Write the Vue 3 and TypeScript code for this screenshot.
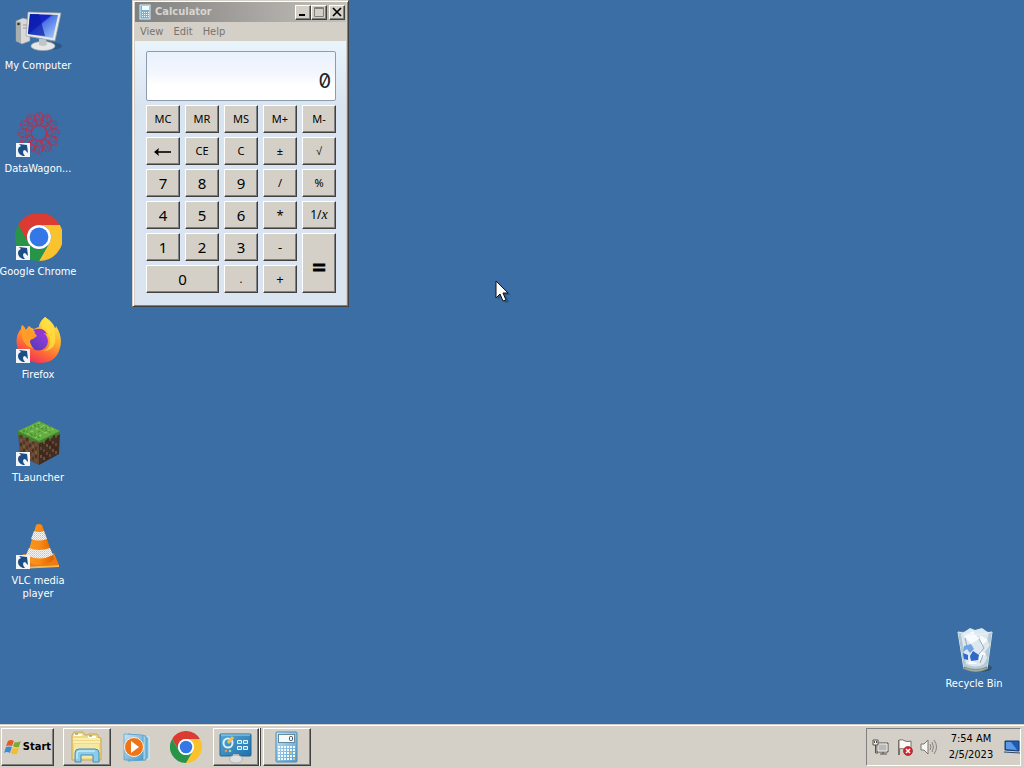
<script setup lang="ts">
import { ref } from 'vue'

interface Shortcut { id: string; label: string; linked: boolean }
interface Key { label: string; kind: string; name?: string }

const shortcuts: Shortcut[] = [
  { id: 'computer', label: 'My Computer', linked: false },
  { id: 'datawagon', label: 'DataWagon...', linked: true },
  { id: 'chrome', label: 'Google Chrome', linked: true },
  { id: 'firefox', label: 'Firefox', linked: true },
  { id: 'tlauncher', label: 'TLauncher', linked: true },
  { id: 'vlc', label: 'VLC media\nplayer', linked: true },
]

const k = (label: string, kind = 'small', name?: string): Key => ({ label, kind, name })
const keys: Key[] = [
  k('MC'), k('MR'), k('MS'), k('M+'), k('M-'),
  k('←', 'back', 'Backspace'), k('CE'), k('C'), k('±'), k('√'),
  k('7', 'digit'), k('8', 'digit'), k('9', 'digit'), k('/'), k('%'),
  k('4', 'digit'), k('5', 'digit'), k('6', 'digit'), k('*', 'sign'), k('1/x', 'recip'),
  k('1', 'digit'), k('2', 'digit'), k('3', 'digit'), k('-', 'sign'), k('=', 'equals'),
  k('0', 'digit wide'), k('.'), k('+', 'sign'),
]

const display = ref('0')
const press = (key: Key) => {
  if (key.kind.startsWith('digit')) display.value = display.value === '0' ? key.label : display.value + key.label
  else if (key.kind === 'back') display.value = display.value.slice(0, -1) || '0'
  else if (key.label === 'C' || key.label === 'CE') display.value = '0'
}

const petals = Array.from({ length: 12 }, (_, i) => i * 30)
const studs: { x: number; y: number; c: string }[] = []
const tones = ['#4a3020', '#8a6040', '#38251b', '#73513a']
for (let col = 0; col < 6; col++) {
  for (let row = 0; row < 5; row++) {
    const slope = Math.round(col * 1.5)
    studs.push({ x: 6 + col * 3, y: 15 + row * 4 + slope, c: tones[(col * 3 + row * 5) % 4] })
    studs.push({ x: 26 + col * 3, y: 23 + row * 4 - slope, c: tones[(col + row * 3) % 4] })
  }
}
</script>

<template>
  <div class="screen">
    <svg class="defs" aria-hidden="true">
      <defs>
        <linearGradient id="blueScreen" x1="0" y1="0" x2="1" y2="1">
          <stop offset="0" stop-color="#0b1eb8" /><stop offset=".4" stop-color="#1526c8" />
          <stop offset=".45" stop-color="#4d74e6" /><stop offset="1" stop-color="#a9d0fa" />
        </linearGradient>
        <linearGradient id="flame" x1=".8" y1="0" x2=".3" y2="1">
          <stop offset="0" stop-color="#fff04a" /><stop offset=".4" stop-color="#ffb02e" />
          <stop offset=".7" stop-color="#ff6a35" /><stop offset="1" stop-color="#ee2c60" />
        </linearGradient>
        <linearGradient id="globe" x1="1" y1="0" x2="0" y2="1">
          <stop offset="0" stop-color="#a13be0" /><stop offset="1" stop-color="#4f3bb5" />
        </linearGradient>
        <linearGradient id="cone" x1="0" x2="1">
          <stop offset="0" stop-color="#f59a2a" /><stop offset=".5" stop-color="#f98a12" /><stop offset="1" stop-color="#d96000" />
        </linearGradient>
        <linearGradient id="glass" x1="0" x2="1" y2="1">
          <stop offset="0" stop-color="#c9e6f6" /><stop offset="1" stop-color="#4e9bce" />
        </linearGradient>
        <linearGradient id="panel" x1="0" x2="1" y2="1">
          <stop offset="0" stop-color="#56a9d6" /><stop offset="1" stop-color="#1f6fac" />
        </linearGradient>
        <pattern id="check" width="2" height="2" patternUnits="userSpaceOnUse">
          <rect width="2" height="2" fill="#f6f4f2" /><rect width="1" height="1" fill="#c4c4c8" /><rect x="1" y="1" width="1" height="1" fill="#d4d4d8" />
        </pattern>
        <symbol id="chromeMark" viewBox="-24 -24 48 48">
          <path d="M-20.8-12A24 24 0 0 1 20.8-12H0A12 12 0 0 0-10.4 6Z" fill="#dc3b32" />
          <path d="M20.8-12A24 24 0 0 1 0 24L10.4 6A12 12 0 0 0 0-12Z" fill="#fac32e" />
          <path d="M0 24A24 24 0 0 1-20.8-12L-10.4 6A12 12 0 0 0 10.4 6Z" fill="#289447" />
          <circle r="12" fill="#fff" /><circle r="9.4" fill="#3478e8" />
        </symbol>
      </defs>
    </svg>

    <main class="desktop">
      <nav class="shortcuts" aria-label="Desktop">
        <button v-for="s in shortcuts" :key="s.id" class="shortcut" type="button">
          <svg class="icon" viewBox="0 0 48 48" aria-hidden="true">
            <g v-if="s.id === 'computer'">
              <ellipse cx="34" cy="38" rx="14" ry="4" fill="#1d426d" opacity=".5" />
              <path d="M2 13L9 10L16 12V33L8 36L2 33Z" fill="#d8d9d8" stroke="#8c9294" stroke-width=".6" />
              <path d="M2 13L7 14V35L2 33Z" fill="#a9aeae" /><circle cx="4.500" cy="16" r="1.300" fill="#333" />
              <path d="M9 17H13M9 20H13" stroke="#999" />
              <path d="M25 31H32L33 39H25Z" fill="#b9bdc0" />
              <ellipse cx="29" cy="38" rx="12" ry="4.500" fill="#e6e7e6" stroke="#a5abad" stroke-width=".6" />
              <path d="M25 31H32L33 37Q29 39 25 37Z" fill="#c3c6c8" />
              <path d="M14 4L47 5L41 33L12 28Z" fill="#e8e8e4" stroke="#9a9fa2" stroke-width=".7" />
              <path d="M16 6L44 7L39 30L14 26Z" fill="url(#blueScreen)" />
              <path d="M16 6H25L31 28L14 26Z" fill="#0c1cab" opacity=".7" />
            </g>
            <g v-else-if="s.id === 'datawagon'" transform="translate(25 22)" fill="none" stroke="#b82f50" stroke-width="1">
              <g v-for="a in petals" :key="a" :transform="`rotate(${a})`">
                <ellipse cx="0" cy="-14" rx="4.500" ry="7" stroke-dasharray="2 1" />
                <path d="M0-7L6-17M0-7L-6-17M0-20V-12M-3-19L3-13" stroke-dasharray="1.500 1.500" />
              </g>
              <circle r="8" stroke-dasharray="2 1" /><circle r="13" stroke-dasharray="1 2" /><circle r="18" stroke-dasharray="1 3" />
            </g>
            <use v-else-if="s.id === 'chrome'" href="#chromeMark" x="1" y="-1" width="48" height="48" />
            <g v-else-if="s.id === 'firefox'">
              <path d="M31 0Q39 5 41 11Q42 11 42 9Q49 20 46 31Q42 46 26 46Q7 45 3 29Q1 18 7 12L8 8Q11 10 12 13L15 9Q18 12 20 12Q24 10 25 10Q25 5 31 0Z" fill="url(#flame)" />
              <path d="M31 0Q25 7 29 12Q36 16 36 25Q35 33 29 34Q38 34 41 26Q42 20 40 12Q38 6 31 0Z" fill="#ffe243" opacity=".75" />
              <circle cx="24.500" cy="24" r="9.500" fill="url(#globe)" />
              <path d="M19 13Q29 9 33 17Q27 15 25 19Q22 16 19 13Z" fill="#9437c9" />
              <path d="M7 12L8 8Q11 10 12 13L15 9Q16 13 20 15L23 19L19 22Q16 22 16 25Q17 29 20 32Q10 29 8 20Z" fill="#ff9d28" />
            </g>
            <g v-else-if="s.id === 'tlauncher'">
              <path d="M4 11L25 21V45L6 36Z" fill="#644731" />
              <path d="M46 11L25 21V45L45 34Z" fill="#402b20" />
              <rect v-for="(d, i) in studs" :key="i" :x="d.x" :y="d.y" width="2" height="3" :fill="d.c" opacity=".65" />
              <path d="M4 11L25 1L46 11V14L43 16L40 15L37 19L34 18L30 22L25 23L21 21L17 22L14 17L10 18L8 15L4 15Z" fill="#44812d" />
              <path d="M4 11L25 1L46 11L25 21Z" fill="#64ad43" />
              <path d="M12 9L29 17M18 6L35 14M13 14L31 5M21 18L39 8M24 3L42 11" stroke="#8aca63" stroke-width="1.200" stroke-dasharray="2 3" />
              <path d="M9 10L26 18M20 5L38 13M9 12L28 3M17 16L36 6" stroke="#438730" stroke-dasharray="2 2" />
            </g>
            <g v-else>
              <path d="M9 31L40 30L45 42L5 44Z" fill="#ee7b12" /><path d="M5 44L45 42V44L5 46Z" fill="#ffb54d" />
              <path d="M22 2Q25 0 28 2L40 36Q34 42 25 42Q17 42 12 37Z" fill="url(#cone)" />
              <path d="M20 8Q25 10 30 8L33 16Q25 19 17 16Z" fill="url(#check)" />
              <path d="M15 25Q25 29 36 25L39 32Q26 39 12 32Z" fill="url(#check)" />
            </g>
            <g v-if="s.linked">
              <rect x="2" y="32" width="14" height="14" fill="#f1f4f8" />
              <path d="M9 45Q4 43 4 39Q4 36 7 35L5 33L13 34L14 42L11 39Q9 39 9 41Q9 43 11 45Z" fill="#1c4d85" />
            </g>
          </svg>
          <span>{{ s.label }}</span>
        </button>
      </nav>

      <section class="window" aria-label="Calculator">
        <header class="titlebar">
          <svg class="mini" viewBox="0 0 14 16" aria-hidden="true">
            <rect x="2" y="1" width="10" height="14" fill="#75b2d5" stroke="#d6eefa" />
            <rect x="4" y="2" width="7" height="4" fill="#f0fbff" />
            <path d="M4 8.500H11M4 10.500H11M4 12.500H11" stroke="#eefaff" stroke-dasharray="1 1" />
          </svg>
          <h1>Calculator</h1>
          <button type="button" class="cap" aria-label="Minimize"><svg viewBox="0 0 14 12"><path d="M3 9H9" stroke="#000" stroke-width="2" /></svg></button>
          <button type="button" class="cap" aria-label="Maximize"><svg viewBox="0 0 14 12"><path d="M2.500 1.500H11.500V10.500H2.500ZM2.500 2.500H11.500" fill="none" stroke="#858077" /></svg></button>
          <button type="button" class="cap close" aria-label="Close"><svg viewBox="0 0 14 12"><path d="M3 2L11 10M11 2L3 10" stroke="#000" stroke-width="1.700" /></svg></button>
        </header>
        <nav class="menu" aria-label="Menu">
          <button type="button">View</button><button type="button">Edit</button><button type="button">Help</button>
        </nav>
        <div class="calc">
          <output class="display">{{ display }}</output>
          <div class="keys">
            <button v-for="key in keys" :key="key.label" type="button" class="key" :class="key.kind" :aria-label="key.name" @click="press(key)">
              <svg v-if="key.kind === 'back'" viewBox="0 0 18 10" aria-hidden="true"><path d="M3 6H17" stroke="#000" stroke-width="1.600" /><path d="M0 6L5 2L4 6L5 10Z" /></svg>
              <template v-else-if="key.kind === 'recip'">1/<i>x</i></template>
              <template v-else>{{ key.label }}</template>
            </button>
          </div>
        </div>
      </section>

      <button class="shortcut bin" type="button">
        <svg class="icon" viewBox="0 0 48 48" aria-hidden="true">
          <ellipse cx="29" cy="42" rx="13" ry="4" fill="#203f49" opacity=".55" />
          <path d="M8 6L42 6L37 43Q26 48 14 43Z" fill="#b5c9d7" stroke="#71909e" />
          <path d="M11 8L20 2L25 4L32 2L39 7L37 14L40 19L35 26L37 32L34 38Q26 43 16 38Z" fill="#dce7ef" />
          <path d="M14 10L23 5L29 13L21 18ZM30 9L38 14L31 20ZM30 24L36 28L29 35ZM20 33L27 38L18 38Z" fill="#f8fbfd" />
          <path d="M29 13L34 22L29 28M15 12L17 20M33 29L30 37" fill="none" stroke="#91a9b9" />
          <path d="M14 20L21 18L24 23L20 27L17 23L13 26Z" fill="#6fa3e2" />
          <path d="M20 30L23 25L29 29L28 34L21 35ZM13 27L18 29L18 34L14 33Z" fill="#2e68cb" />
          <path d="M8 6Q25 11 42 6" fill="none" stroke="#e8f3f8" />
          <path d="M8 6L14 43M42 6L37 43" stroke="#d0e3eb" /><path d="M14 41Q26 46 37 41V43Q26 49 14 43Z" fill="#a4aea2" stroke="#5c7065" stroke-width=".6" />
        </svg>
        <span>Recycle Bin</span>
      </button>

      <svg class="pointer" viewBox="0 0 16 24" aria-hidden="true">
        <path d="M3 3V20L7 16L10 23L14 22L11 15H16Z" fill="#183b62" opacity=".45" />
        <path d="M1 1V18L5 14L8 21L11 20L8 13H13Z" fill="#fff" stroke="#111" />
      </svg>
    </main>

    <footer class="taskbar">
      <button type="button" class="start">
        <svg viewBox="0 0 18 18" aria-hidden="true">
          <path d="M4 3Q7 1 10 3L8 8Q5 7 2 8Z" fill="#e65b24" /><path d="M11 4Q14 5 17 3L15 9Q12 10 9 8Z" fill="#78ad34" />
          <path d="M2 9Q5 8 8 9L6 15Q3 13 0 15Z" fill="#408bd0" /><path d="M9 10Q12 11 15 10L13 16Q10 17 7 15Z" fill="#f6bd24" />
        </svg>
        <strong>Start</strong>
      </button>
      <div class="tasks">
        <button type="button" class="task raised" aria-label="File Explorer">
          <svg viewBox="0 0 36 36" aria-hidden="true">
            <path d="M3 6L5 3H14L16 6H18L20 5H28L30 9H32V31H3Z" fill="#efd983" stroke="#c49c45" stroke-width=".8" />
            <path d="M5 6H13M19 8H27" stroke="#fff" stroke-width="2" /><path d="M6 5H9M20 7H23" stroke="#71813a" />
            <path d="M4 10H31M4 13H31" stroke="#fff4bd" stroke-width="1.500" /><path d="M5 15H30V29H5Z" fill="#f5e7a4" />
            <path d="M6 33V24Q6 20 10 20H26Q30 20 30 24V33H24V26H12V33Z" fill="#8bcce9" stroke="#438cb8" />
            <path d="M8 30V24Q8 22 11 22H26" fill="none" stroke="#dff8ff" />
          </svg>
        </button>
        <button type="button" class="task" aria-label="Media Player">
          <svg viewBox="0 0 36 36" aria-hidden="true">
            <path d="M12 6L30 8V30L12 32Z" fill="#79b9db" stroke="#e2f4fb" />
            <path d="M9 5L27 7V31L9 32Z" fill="#a2d0e7" stroke="#4b94bd" stroke-width=".8" />
            <path d="M5 5L24 6V31L5 31Z" fill="url(#glass)" stroke="#579cc4" stroke-width=".7" />
            <circle cx="15" cy="18" r="9.500" fill="#ee7517" stroke="#fff1dc" /><path d="M12 12L20 18L12 24Z" fill="#fff" />
          </svg>
        </button>
        <button type="button" class="task" aria-label="Google Chrome"><svg viewBox="0 0 36 36" aria-hidden="true"><use href="#chromeMark" x="1" y="2" width="32" height="32" /></svg></button>
        <button type="button" class="task raised stacked" aria-label="Control Panel">
          <svg viewBox="0 0 36 36" aria-hidden="true">
            <rect x="2" y="5" width="31" height="22" rx="1" fill="url(#panel)" stroke="#216694" />
            <path d="M3 6H32" stroke="#9dd8f1" />
            <circle cx="10" cy="14" r="4.500" fill="none" stroke="#d7f1ff" stroke-width="2" /><path d="M10 14L15 8" stroke="#f4bd50" stroke-width="3" />
            <path d="M19.500 11.500H23.500V14.500H19.500ZM25.500 11.500H29.500V14.500H25.500ZM19.500 17.500H23.500V20.500H19.500ZM25.500 17.500H29.500V20.500H25.500Z" fill="#4e9ed0" stroke="#e5f5fb" />
            <circle cx="8" cy="22" r="1.300" fill="#ff8b35" /><circle cx="12" cy="22" r="1.300" fill="#9bdf8d" />
            <path d="M15 25H21V29H15Z" fill="#b6b9ba" /><ellipse cx="18" cy="30" rx="6.500" ry="4" fill="#dedfde" stroke="#979e9e" stroke-width=".6" />
          </svg>
        </button>
        <button type="button" class="task raised" aria-label="Calculator">
          <svg viewBox="0 0 36 36" aria-hidden="true">
            <rect x="7" y="3" width="21" height="30" rx="1" fill="url(#glass)" stroke="#4d8eb5" />
            <rect x="9.500" y="5.500" width="16" height="8" fill="#f5faf7" stroke="#638a9e" /><rect x="20.500" y="7.500" width="3" height="4" rx="1" fill="none" stroke="#41484f" />
            <path d="M9 18H26M9 21H26M9 24H26M9 27H26M9 30H26" stroke="#f1fbff" stroke-width="2" stroke-dasharray="2 1" />
            <path d="M21 24H23M24 30H26" stroke="#edbb60" stroke-width="2" />
          </svg>
        </button>
      </div>
      <div class="tray">
        <button type="button" aria-label="Network">
          <svg viewBox="0 0 18 18"><path d="M5 5H16V14H5Z" fill="#bbb9b5" stroke="#54534f" /><path d="M6 6H15V13H6Z" fill="none" stroke="#eee" /><path d="M8 16H15M11 14V16" stroke="#54534f" /><path d="M1 2H6V7H1Z" fill="#eee" stroke="#54534f" /><path d="M3.500 7V15H6M2.500 3V5M4.500 3V5" fill="none" stroke="#54534f" /></svg>
        </button>
        <button type="button" aria-label="Action Center">
          <svg viewBox="0 0 18 18"><path d="M3 2V17" stroke="#77736c" stroke-width="2" /><path d="M3 2Q7 1 9 3Q12 4 15 3V11Q10 13 8 11Q6 10 3 11Z" fill="#faf9f5" stroke="#75726e" /><circle cx="12" cy="13" r="4.500" fill="#d3262e" stroke="#8d1a21" stroke-width=".6" /><path d="M10 11L14 15M14 11L10 15" stroke="#fff" stroke-width="1.500" /></svg>
        </button>
        <button type="button" aria-label="Volume">
          <svg viewBox="0 0 18 18"><path d="M1 6H4L8 2V16L4 12H1Z" fill="#f6f5f2" stroke="#77746f" /><path d="M10 6Q12 9 10 12M12 4Q15 9 12 14M14 2Q19 9 14 16" fill="none" stroke="#85817b" /></svg>
        </button>
        <time datetime="2023-02-05T07:54">7:54 AM<br />2/5/2023</time>
        <button type="button" class="show" aria-label="Show desktop">
          <svg viewBox="0 0 16 16"><path d="M1 2H15V12L1 11Z" fill="#1e5bb6" stroke="#183f70" /><path d="M2 3H7L13 11L2 10Z" fill="#5d9bea" /><path d="M0 13L16 14" stroke="#2c4668" /></svg>
        </button>
      </div>
    </footer>
  </div>
</template>

<style>
body { margin: 0; }
</style>

<style scoped>
.screen { display: flex; flex-direction: column; min-height: 100vh; background: #3a6ea5; font: 11px/13px "DejaVu Sans Condensed", "Noto Sans", sans-serif; color: #000; overflow: hidden; }
.screen *, .screen *::before { box-sizing: border-box; }
button { margin: 0; padding: 0; border: 0; background: none; color: inherit; font: inherit; }
svg { display: block; }
.defs { position: absolute; width: 0; height: 0; }
.desktop { position: relative; flex: 1; }
.shortcuts { display: flex; flex-direction: column; width: 76px; }
.shortcut { display: flex; flex-direction: column; align-items: center; gap: 3px; height: 103px; padding-top: 8px; color: #fff; text-align: center; white-space: pre; }
.icon { width: 48px; height: 48px; flex: none; }
.bin { position: absolute; right: 12px; bottom: 3px; width: 76px; }

.window { position: absolute; left: 132px; top: 0; width: 217px; padding: 1px; border: 1px solid; border-color: #d4d0c8 #404040 #404040 #d4d0c8; background: #d4d0c8; box-shadow: inset 1px 1px #fff, inset -1px -1px #808080; }
.titlebar { display: flex; align-items: center; height: 20px; margin: 0 1px; padding: 0 1px 0 3px; background: linear-gradient(90deg, #808080, #c4c1ba); }
.titlebar h1 { flex: 1; margin: 0 0 0 3px; font: bold 11px/16px "DejaVu Sans Condensed", sans-serif; color: #d8d5ce; }
.mini { width: 14px; height: 16px; }
.cap { width: 16px; height: 15px; background: #d4d0c8; border: 1px solid; border-color: #fff #404040 #404040 #fff; box-shadow: inset -1px -1px #808080; }
.cap svg { width: 14px; height: 12px; }
.close { margin-left: 2px; }
.menu { display: flex; gap: 10px; height: 19px; padding: 0 6px; color: #77736d; }
.calc { padding: 10px 10px 12px 11px; margin: 0 1px; background: linear-gradient(#eaf4fb, #d9e4f1 25%, #dbe5f2); }
.display { display: flex; align-items: flex-end; justify-content: flex-end; height: 50px; padding: 0 4px 7px; border: 1px solid #8e9cad; border-radius: 2px; background: linear-gradient(#eaf1fc, #f3f7fe 45%, #fff 70%); font: 20px/24px Inter, sans-serif; font-feature-settings: "zero"; color: #222; }
.keys { display: grid; grid-template-columns: repeat(5, 1fr); grid-auto-rows: 28px; gap: 4px 5px; margin-top: 4px; }
.key { display: flex; align-items: center; justify-content: center; min-width: 0; background: #d4d0c8; border: 1px solid; border-color: #fff #404040 #404040 #fff; box-shadow: inset -1px -1px #808080; font: 11px/16px "Noto Sans", sans-serif; }
.sign { font-size: 13px; }
.digit { font-size: 15px; }
.wide { grid-column: span 2; }
.equals { grid-row: span 2; padding-top: 8px; font-size: 24px; line-height: 24px; font-weight: 500; -webkit-text-stroke: 1px #000; }
.back svg { width: 18px; height: 10px; }
.recip { font-size: 12px; }
.recip i { font: italic 14px/16px "Liberation Serif", serif; }
.pointer { position: absolute; left: 495px; top: 280px; width: 16px; height: 24px; }

.taskbar { display: flex; align-items: flex-start; height: 44px; padding: 4px 3px 2px 1px; background: #d4d0c8; box-shadow: inset 0 1px #d4d0c8, inset 0 2px #fff; }
.start, .raised { border: 1px solid; border-color: #fff #404040 #404040 #fff; box-shadow: inset -1px -1px #808080; }
.start { display: flex; align-items: center; gap: 1px; width: 53px; height: 38px; padding: 0 2px; }
.start svg { width: 18px; height: 18px; }
.start strong { font: bold 11px/16px "DejaVu Sans Condensed", sans-serif; }
.tasks { display: flex; gap: 2px; margin-left: 9px; flex: 1; }
.task { display: grid; place-items: center; width: 48px; height: 38px; }
.task svg { width: 36px; height: 36px; }
.stacked { position: relative; width: 46px; margin-right: 2px; }
.stacked::before { content: ""; position: absolute; top: -1px; right: -3px; width: 2px; height: 38px; border-right: 1px solid #404040; background: #fff; }
.tray { display: flex; align-items: center; gap: 6px; height: 38px; padding-left: 5px; border: 1px solid; border-color: #808080 #fff #fff #808080; }
.tray button svg { width: 18px; height: 18px; }
.tray time { width: 54px; line-height: 16px; text-align: center; white-space: nowrap; }
.tray .show svg { width: 16px; height: 16px; }
</style>
